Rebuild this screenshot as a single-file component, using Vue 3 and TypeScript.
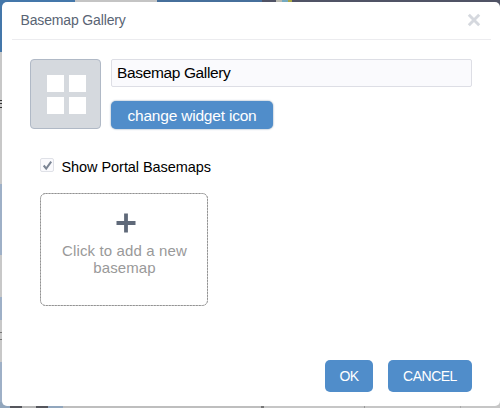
<script setup lang="ts">
import { ref } from 'vue'

const title = 'Basemap Gallery'
const label = ref('Basemap Gallery')
const showPortal = ref(true)
</script>

<template>
  <div class="backdrop">
    <section class="dialog">
      <header class="header">
        <h1 class="title">{{ title }}</h1>
        <svg class="close" width="14" height="14" viewBox="0 0 14 14">
          <path d="M1.8 1.8 12.2 12.2M12.2 1.8 1.8 12.2" stroke="#d5d8de" stroke-width="2.9" />
        </svg>
      </header>
      <div class="widget">
        <div class="thumb">
          <i v-for="n in 4" :key="n" class="tile"></i>
        </div>
        <div class="fields">
          <input v-model="label" class="name" type="text" />
          <button class="btn change"><span>change widget icon</span></button>
        </div>
      </div>
      <div class="option" @click="showPortal = !showPortal">
        <span class="box">
          <svg v-if="showPortal" width="11" height="11" viewBox="0 0 11 11">
            <path d="M1.7 5.5 4.2 8.6 9.2 1.7" fill="none" stroke="#7b8594" stroke-width="2" />
          </svg>
        </span>
        <span class="option-text">Show Portal Basemaps</span>
      </div>
      <div class="add">
        <svg class="outline" width="168" height="113" viewBox="0 0 168 113">
          <rect x=".5" y=".5" width="167" height="112" rx="5" fill="none" stroke="#d2d2d2" />
          <rect x=".5" y=".5" width="167" height="112" rx="5" fill="none" stroke="#929292" stroke-dasharray="2 1" />
        </svg>
        <svg class="plus" width="20" height="20" viewBox="0 0 20 20">
          <path d="M10 .5V19.5M.5 10H19.5" stroke="#5f6979" stroke-width="3.8" />
        </svg>
        <span class="add-text">Click to add a new</span>
        <span class="add-text">basemap</span>
      </div>
      <footer class="footer">
        <button class="btn ok"><span>OK</span></button>
        <button class="btn cancel"><span>CANCEL</span></button>
      </footer>
    </section>
  </div>
</template>

<style>
body {
  margin: 0;
  overflow: hidden;
}
</style>

<style scoped>
* {
  box-sizing: border-box;
}

.backdrop {
  width: 500px;
  height: 408px;
  padding: 2px 0 2px 2px;
  font-family: "Liberation Sans", Arial, sans-serif;
  background:
    linear-gradient(90deg, #4477aa 75px, #c4c4c4 75px 157px, #466f9b 157px 262px, #505365 262px 276px, #b8b8ae 276px 282px, #74a9bf 282px 288px, #aaa744 288px 292px, #505365 292px) 0 0 / 500px 6px no-repeat,
    linear-gradient(90deg, #91a6bd 10px, #55565c 10px 22px, #b7b7b7 22px 36px, #55565c 36px 48px, #91a6bd 48px 63px, #bebebe 63px 261px, #777 261px 264px, #c6c6c6 264px 364px, #999 364px 365px, #c6c6c6 365px 460px, #aaa 460px 461px, #c6c6c6 461px) 0 402px / 500px 6px no-repeat,
    linear-gradient(#4477aa 52px, #c8c8c8 52px 100px, #333 100px 101px, #c8c8c8 101px 103px, #333 103px 104px, #c8c8c8 104px 107px, #333 107px 108px, #c8c8c8 108px 184px, #9eb0c7 184px 255px, #c8c8c8 255px 297px, #9eb0c7 297px 320px, #c8c8c8 320px 332px, #777 332px 333px, #c8c8c8 333px 339px, #777 339px 340px, #c8c8c8 340px 362px, #9eb0c7 362px);
}

.dialog {
  display: flex;
  flex-direction: column;
  width: 498px;
  height: 404px;
  border-radius: 5px;
  background: #fff;
}

.header {
  display: flex;
  justify-content: space-between;
  height: 38px;
  margin: 0 9px 0 10px;
  padding: 0 10px 0 8.5px;
  border-bottom: 1px solid #ececef;
}

.title {
  margin: 10px 0 0;
  font-size: 14px;
  line-height: 17px;
  font-weight: 400;
  letter-spacing: -0.15px;
  color: #596474;
}

.close {
  margin-top: 11px;
}

.widget {
  display: flex;
  gap: 9px;
  margin: 19px 0 0 28px;
}

.thumb {
  display: grid;
  grid-template-columns: 17px 17px;
  grid-auto-rows: 17px;
  gap: 5px;
  place-content: center;
  width: 71px;
  height: 70px;
  padding-left: 2px;
  border: 1px solid #b0b9c6;
  border-radius: 4px;
  background: #d5d9de;
}

.tile {
  background: #fff;
}

.fields {
  display: flex;
  flex-direction: column;
  align-items: flex-start;
}

.name {
  width: 361px;
  height: 28px;
  margin-left: 1px;
  padding: 0 5px;
  border: 1px solid #dddee5;
  border-radius: 2px;
  outline: 0;
  background: #fafafd;
  color: #000;
  font: 15.5px "Liberation Sans", Arial, sans-serif;
  letter-spacing: -0.36px;
}

.btn {
  display: flex;
  align-items: center;
  justify-content: center;
  padding: 0;
  border: 0;
  border-radius: 5px;
  background: #508dca;
  color: #fff;
  font-family: "Liberation Sans", Arial, sans-serif;
  white-space: nowrap;
}

.change {
  width: 162px;
  height: 28px;
  margin: 14px 0 0 1px;
  padding-top: 2px;
  box-shadow: 0 0 2px #718da8;
  font-size: 15.5px;
  letter-spacing: -0.2px;
}

.option {
  display: flex;
  gap: 7.5px;
  height: 18px;
  margin: 29px 0 0 38px;
}

.box {
  display: flex;
  align-items: center;
  justify-content: center;
  width: 14px;
  height: 14px;
  margin-top: 0;
  border: 1px solid #dfe1e7;
  border-radius: 2px;
  background: #fafafd;
}

.option-text {
  font-size: 14.5px;
  line-height: 19px;
  letter-spacing: -0.06px;
  white-space: nowrap;
}

.add {
  display: grid;
  grid-template-rows: 49px 17px 17px;
  justify-items: center;
  position: relative;
  width: 168px;
  height: 113px;
  margin: 17px 0 0 38px;
}

.outline {
  position: absolute;
  inset: 0;
}

.plus {
  margin: 20px 0 0 4px;
}

.add-text {
  padding-left: 1px;
  color: #999;
  font-size: 15px;
  line-height: 17px;
  letter-spacing: 0.13px;
  white-space: nowrap;
}

.footer {
  display: flex;
  justify-content: flex-end;
  gap: 15px;
  margin: auto 28px 14px 0;
}

.ok,
.cancel {
  height: 32px;
  font-size: 14px;
  letter-spacing: -0.5px;
}

.ok {
  width: 48px;
}

.cancel {
  width: 84px;
}
</style>
